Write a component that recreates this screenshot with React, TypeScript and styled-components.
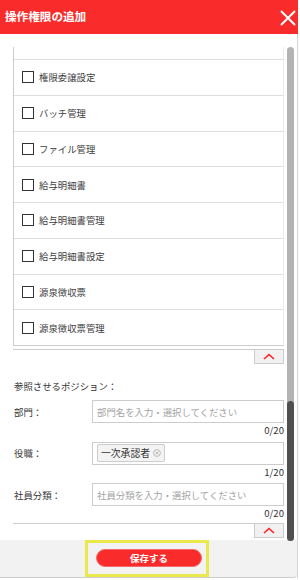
import React, { useLayoutEffect, useRef } from 'react';
import styled, { createGlobalStyle } from 'styled-components';

const GlobalStyle = createGlobalStyle`
  html, body { margin: 0; padding: 0; background: #ffffff; }
  body {
    font-family: "Noto Sans CJK JP", "Noto Sans", "Liberation Sans", sans-serif;
    color: #333333;
  }
  * { box-sizing: border-box; }
`;

const Dialog = styled.div`
  width: 298px;
  display: flex;
  flex-direction: column;
`;

const Header = styled.header`
  height: 34px;
  background: #fa2b2b;
  display: flex;
  align-items: center;
  justify-content: space-between;
  padding: 0 2px 2px 5px;
`;

const Title = styled.h1`
  margin: 0;
  font-size: 11.6px;
  font-weight: 700;
  color: #ffffff;
  letter-spacing: 0;
`;

const CloseButton = styled.button`
  width: 16px;
  height: 16px;
  padding: 0;
  border: none;
  background: transparent;
  display: flex;
  margin-top: 3px;
  cursor: pointer;
`;

const Panel = styled.div`
  position: relative;
  border-right: 1px solid #d6d6d6;
  display: flex;
  flex-direction: column;
`;

const Body = styled.div`
  height: 506px;
  padding-top: 13px;
  background: #ffffff;
`;

const ScrollArea = styled.div`
  height: 493px;
  overflow: hidden;
`;

const Content = styled.div`
  display: flex;
  flex-direction: column;
  padding: 0 13px 2px 13px;
`;

const ListBox = styled.ul`
  margin: 0;
  padding: 12px 0 0 0;
  list-style: none;
  border-left: 1px solid #cccccc;
  border-right: 1px solid #ececec;
  border-bottom: 1px solid #cccccc;
`;

const ListItem = styled.li`
  height: 35.75px;
  border-top: 1px solid #dddddd;
  display: flex;
  align-items: center;
  gap: 5px;
  padding-left: 8px;
  font-size: 9.4px;
  color: #3d3d3d;
`;

const CheckBox = styled.span`
  width: 12px;
  height: 12px;
  border: 1.5px solid #333333;
  background: #ffffff;
  flex: none;
`;

const Rule = styled.div<{ $gap: number }>`
  height: 1px;
  background: #cccccc;
  margin-top: ${p => p.$gap}px;
`;

const ToggleButton = styled.button`
  align-self: flex-end;
  width: 30px;
  height: 14px;
  padding: 0;
  border: 1px solid #cccccc;
  border-top: none;
  background: #f1f1f1;
  display: flex;
  align-items: center;
  justify-content: center;
`;

const SectionTitle = styled.div`
  margin-top: 15px;
  line-height: 14px;
  font-size: 9.4px;
  color: #333333;
  padding-left: 1px;
`;

const Form = styled.div`
  margin-top: 7px;
  display: flex;
  flex-direction: column;
  gap: 4.5px;
`;

const Field = styled.div`
  display: grid;
  grid-template-columns: 79px 1fr;
`;

const Label = styled.label`
  padding-left: 1px;
  height: 23px;
  display: flex;
  align-items: center;
  font-size: 9.4px;
  color: #333333;
`;

const InputBox = styled.div`
  height: 23px;
  border: 1px solid #cccccc;
  background: #ffffff;
  display: flex;
  align-items: center;
  padding: 0 4px;
`;

const Placeholder = styled.span`
  font-size: 9.4px;
  color: #a3a3a3;
`;

const Chip = styled.span`
  height: 18px;
  display: inline-flex;
  align-items: center;
  gap: 3px;
  padding: 0 3px 0 3px;
  border: 1px solid #cccccc;
  border-radius: 2px;
  background: #f3f3f3;
  font-size: 9.8px;
  color: #333333;
`;

const Counter = styled.div`
  grid-column: 2;
  text-align: right;
  line-height: 14px;
  font-size: 9.6px;
  color: #333333;
`;

const Footer = styled.footer`
  height: 38px;
  background: #f2f2f2;
  border-bottom: 1px solid #cccccc;
  border-bottom-right-radius: 4px;
  display: flex;
  justify-content: center;
  align-items: flex-start;
`;

const Highlight = styled.div`
  height: 37px;
  border: 3px solid #e9e94c;
  padding: 0 4px 0 8px;
  margin-right: 3px;
  display: flex;
  align-items: center;
`;

const SaveButton = styled.button`
  width: 106px;
  height: 18px;
  border-radius: 9px;
  border: 1px solid #f46a6a;
  background: #fa2b2b;
  color: #ffffff;
  font-family: inherit;
  font-size: 9.5px;
  font-weight: 700;
  padding: 0;
  margin-bottom: 1px;
`;

const ScrollTrack = styled.div`
  position: absolute;
  top: 13px;
  right: 3px;
  width: 7px;
  height: 494px;
  border-radius: 4px;
  background: #b3b3b3;
`;

const ScrollThumb = styled.div`
  position: absolute;
  left: 0;
  right: 0;
  bottom: 0;
  height: 140px;
  border-radius: 4px;
  background: #505050;
`;

const Chevron = () => (
  <svg width="12" height="7" viewBox="0 0 12 7">
    <path d="M1 6 L6 1.5 L11 6" fill="none" stroke="#ff2020" strokeWidth="1.6" />
  </svg>
);

const RemoveIcon = () => (
  <svg width="8" height="8" viewBox="0 0 8 8">
    <circle cx="4" cy="4" r="3.4" fill="none" stroke="#b5b5b5" strokeWidth="0.9" />
    <path d="M2.6 2.6 L5.4 5.4 M5.4 2.6 L2.6 5.4" stroke="#b5b5b5" strokeWidth="0.9" />
  </svg>
);

const permissions = [
  '権限委譲設定',
  'バッチ管理',
  'ファイル管理',
  '給与明細書',
  '給与明細書管理',
  '給与明細書設定',
  '源泉徴収票',
  '源泉徴収票管理',
];

export default function App() {
  const scrollRef = useRef<HTMLDivElement>(null);

  useLayoutEffect(() => {
    const el = scrollRef.current;
    if (el) el.scrollTop = el.scrollHeight;
  }, []);

  return (
    <>
      <GlobalStyle />
      <Dialog>
        <Header>
          <Title>操作権限の追加</Title>
          <CloseButton aria-label="閉じる">
            <svg width="16" height="16" viewBox="0 0 16 16">
              <path d="M1 1 L15 15 M15 1 L1 15" stroke="#ffffff" strokeWidth="2" />
            </svg>
          </CloseButton>
        </Header>
        <Panel>
          <Body>
            <ScrollArea ref={scrollRef}>
              <Content>
                <ListBox>
                  {permissions.map(p => (
                    <ListItem key={p}>
                      <CheckBox />
                      <span>{p}</span>
                    </ListItem>
                  ))}
                </ListBox>
                <Rule $gap={3} />
                <ToggleButton aria-label="折りたたむ">
                  <Chevron />
                </ToggleButton>
                <SectionTitle>参照させるポジション：</SectionTitle>
                <Form>
                  <Field>
                    <Label>部門：</Label>
                    <InputBox>
                      <Placeholder>部門名を入力・選択してください</Placeholder>
                    </InputBox>
                    <Counter>0/20</Counter>
                  </Field>
                  <Field>
                    <Label>役職：</Label>
                    <InputBox>
                      <Chip>
                        一次承認者
                        <RemoveIcon />
                      </Chip>
                    </InputBox>
                    <Counter>1/20</Counter>
                  </Field>
                  <Field>
                    <Label>社員分類：</Label>
                    <InputBox>
                      <Placeholder>社員分類を入力・選択してください</Placeholder>
                    </InputBox>
                    <Counter>0/20</Counter>
                  </Field>
                </Form>
                <Rule $gap={3} />
                <ToggleButton aria-label="折りたたむ">
                  <Chevron />
                </ToggleButton>
              </Content>
            </ScrollArea>
          </Body>
          <Footer>
            <Highlight>
              <SaveButton>保存する</SaveButton>
            </Highlight>
          </Footer>
          <ScrollTrack>
            <ScrollThumb />
          </ScrollTrack>
        </Panel>
      </Dialog>
    </>
  );
}
